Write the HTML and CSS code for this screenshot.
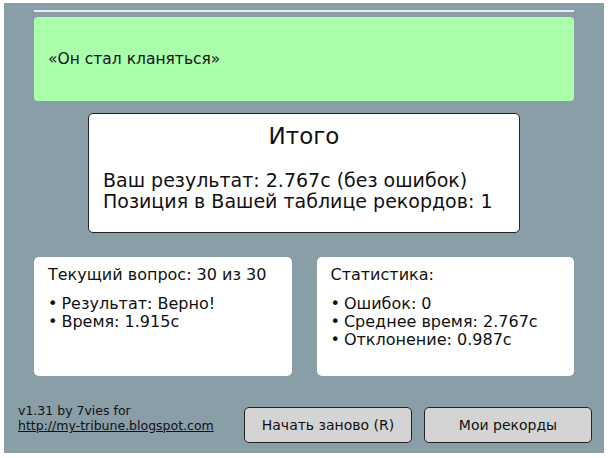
FILE: index.html
```html
<!DOCTYPE html>
<html lang="ru">
<head>
  <meta charset="UTF-8"/>
  <title>Итого</title>
  <link rel="stylesheet" href="styles.css">
</head>
<body>

  <div class="app">
    <div class="top-line"></div>

    <div class="question-box">
      <span class="question-text">«Он стал кланяться»</span>
    </div>

    <div class="total-box">
      <h1 class="total-title">Итого</h1>
      <p class="total-line">Ваш результат: 2.767с (без ошибок)</p>
      <p class="total-line">Позиция в Вашей таблице рекордов: 1</p>
    </div>

    <div class="cards">
      <div class="card">
        <div class="card-title">Текущий вопрос: 30 из 30</div>
        <ul class="card-list">
          <li>Результат: Верно!</li>
          <li>Время: 1.915с</li>
        </ul>
      </div>
      <div class="card">
        <div class="card-title">Статистика:</div>
        <ul class="card-list">
          <li>Ошибок: 0</li>
          <li>Среднее время: 2.767с</li>
          <li>Отклонение: 0.987с</li>
        </ul>
      </div>
    </div>

    <div class="footer">
      <div class="credits">
        v1.31 by 7vies for<br>
        <a href="#">http://my-tribune.blogspot.com</a>
      </div>
      <button class="btn">Начать заново (R)</button>
      <button class="btn">Мои рекорды</button>
    </div>
  </div>

</body>
</html>
```

FILE: styles.css
```css
body {
  margin: 0;
  background: #fff;
  font-family: 'DejaVu Sans', Verdana, sans-serif;
  color: #111;
}

.app {
  margin: 3px 4px;
  width: 600px;
  height: 450px;
  background: #8a9ea8;
  box-sizing: border-box;
  padding: 7px 30px 0 30px;
  display: flex;
  flex-direction: column;
}

.top-line {
  height: 2px;
  background: #e8eef0;
  margin-bottom: 5px;
}

.question-box {
  height: 84px;
  background: #aaffaa;
  border-radius: 4px;
  display: flex;
  align-items: center;
  padding: 0 14px;
}

.question-text {
  font-size: 15.5px;
}

.total-box {
  align-self: center;
  width: 432px;
  height: 120px;
  box-sizing: border-box;
  margin-top: 12px;
  background: #fff;
  border: 1px solid #222;
  border-radius: 5px;
  padding: 8px 14px 0 14px;
}

.total-title {
  margin: 0 0 20px;
  font-size: 23px;
  line-height: 28px;
  font-weight: normal;
  text-align: center;
}

.total-line {
  margin: 0;
  font-size: 19px;
  line-height: 21px;
}

.cards {
  display: flex;
  gap: 25px;
  margin-top: 24px;
}

.card {
  flex: 1;
  height: 119px;
  box-sizing: border-box;
  background: #fff;
  border-radius: 5px;
  padding: 9px 14px;
}

.card-title {
  font-size: 16px;
  line-height: 18px;
  margin-bottom: 11px;
}

.card-list {
  margin: 0;
  padding: 0;
  list-style: none;
  font-size: 16px;
  line-height: 18px;
}

.card-list li::before {
  content: "•";
  margin-right: 4px;
}

.footer {
  display: flex;
  align-items: center;
  gap: 12px;
  margin-top: 31px;
  margin-left: -16px;
  margin-right: -18px;
}

.credits {
  align-self: flex-start;
  margin-top: -4px;
  font-size: 12.5px;
  line-height: 15px;
  width: 214px;
}

.credits a {
  color: #111;
}

.btn {
  width: 168px;
  height: 36px;
  background: #d4d4d4;
  border: 1px solid #222;
  border-radius: 5px;
  font-family: inherit;
  font-size: 14px;
  color: #111;
}
```
